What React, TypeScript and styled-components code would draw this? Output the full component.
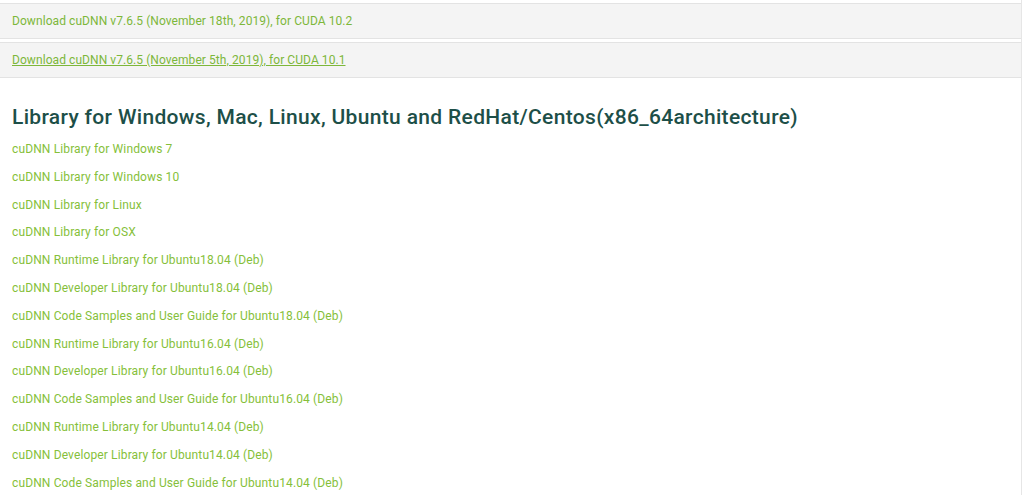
import React from "react";
import styled, { createGlobalStyle } from "styled-components";

const Global = createGlobalStyle`
  html, body { margin: 0; padding: 0; background: #fff; }
  body { font-family: Roboto, "Liberation Sans", sans-serif; }
`;

const Page = styled.div`
  width: 1022px;
  min-height: 495px;
  box-sizing: border-box;
  border-right: 1px solid #e6e6e6;
  padding-top: 3px;
`;

const Panel = styled.div`
  background: #f4f4f4;
  border-top: 1px solid #e3e3e3;
  border-bottom: 1px solid #e3e3e3;
  height: 36px;
  box-sizing: border-box;
  display: flex;
  align-items: center;
  padding-left: 12px;
  margin-bottom: 3px;
`;

const PanelLink = styled.a<{ $underline?: boolean }>`
  font-size: 12px;
  color: #7db73a;
  text-decoration: ${(p) => (p.$underline ? "underline" : "none")};
  letter-spacing: 0.07px;
`;

const Section = styled.section`
  padding: 24px 12px 0;
`;

const Heading = styled.h2`
  margin: 0 0 11px;
  font-size: 21px;
  font-weight: 500;
  color: #1d4f48;
  line-height: 24px;
  letter-spacing: 0.33px;
`;

const LinkList = styled.ul`
  list-style: none;
  margin: 0;
  padding: 0;
  display: flex;
  flex-direction: column;
`;

const Item = styled.li`
  height: 27.8px;
  line-height: 16px;
`;

const ItemLink = styled.a`
  font-size: 12px;
  color: #86bf3a;
  text-decoration: none;
  letter-spacing: 0.13px;
`;

const downloads = [
  { text: "Download cuDNN v7.6.5 (November 18th, 2019), for CUDA 10.2", underline: false },
  { text: "Download cuDNN v7.6.5 (November 5th, 2019), for CUDA 10.1", underline: true },
];

const libs = [
  "cuDNN Library for Windows 7",
  "cuDNN Library for Windows 10",
  "cuDNN Library for Linux",
  "cuDNN Library for OSX",
  "cuDNN Runtime Library for Ubuntu18.04 (Deb)",
  "cuDNN Developer Library for Ubuntu18.04 (Deb)",
  "cuDNN Code Samples and User Guide for Ubuntu18.04 (Deb)",
  "cuDNN Runtime Library for Ubuntu16.04 (Deb)",
  "cuDNN Developer Library for Ubuntu16.04 (Deb)",
  "cuDNN Code Samples and User Guide for Ubuntu16.04 (Deb)",
  "cuDNN Runtime Library for Ubuntu14.04 (Deb)",
  "cuDNN Developer Library for Ubuntu14.04 (Deb)",
  "cuDNN Code Samples and User Guide for Ubuntu14.04 (Deb)",
];

export default function App() {
  return (
    <>
      <Global />
      <Page>
        {downloads.map((d) => (
          <Panel key={d.text}>
            <PanelLink href="#" $underline={d.underline}>{d.text}</PanelLink>
          </Panel>
        ))}
        <Section>
          <Heading>Library for Windows, Mac, Linux, Ubuntu and RedHat/Centos(x86_64architecture)</Heading>
          <LinkList>
            {libs.map((l) => (
              <Item key={l}>
                <ItemLink href="#">{l}</ItemLink>
              </Item>
            ))}
          </LinkList>
        </Section>
      </Page>
    </>
  );
}
